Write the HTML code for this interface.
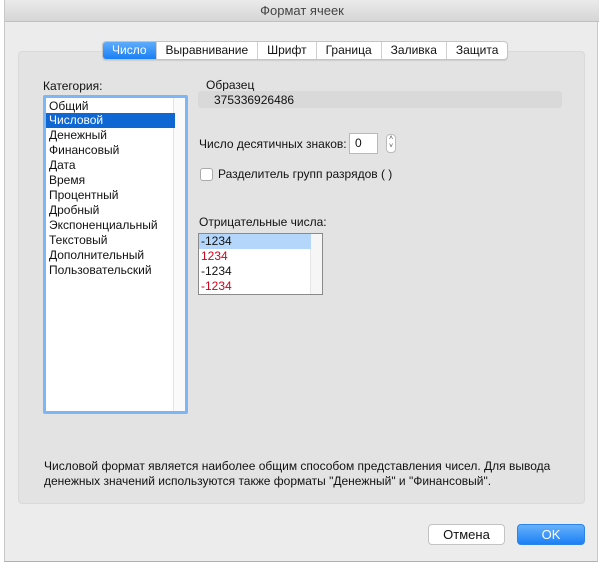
<!DOCTYPE html>
<html><head><meta charset="utf-8"><style>
*{margin:0;padding:0;box-sizing:border-box}
body{width:603px;height:564px;background:#fff;font-family:"Liberation Sans","DejaVu Sans",sans-serif;font-size:12px;color:#111;position:relative;overflow:hidden}
.a{position:absolute}
#win{left:4px;top:0;width:594px;height:562px;background:#ececec;border-left:1px solid #c8c8c8;border-right:1px solid #c8c8c8;border-bottom:1px solid #b0b0b0}
#title{left:0;top:0;width:594px;height:22px;background:linear-gradient(#ebebeb,#d6d6d6);border-bottom:1px solid #c0c0c0;text-align:center;line-height:22px;font-size:13px;color:#444}
#panel{left:18px;top:51px;width:567px;height:453px;background:#e3e3e3;border:1px solid #dadada;border-radius:4px}
#tabs{top:41px;height:19px;display:flex;border:1px solid #c4c4c4;border-radius:4px;background:#fff;overflow:hidden;box-shadow:0 1px 1px rgba(0,0,0,.1)}
#tabs div{padding:0 9px;line-height:17px;font-size:12px;border-left:1px solid #d0d0d0}
#tabs div:first-child{border-left:none;background:linear-gradient(#5fadfc,#1a7ff5);color:#fff;padding:0 9px}
#list{left:43px;top:95px;width:145px;height:319px;background:#fff;border:3px solid #7cb6f5;border-radius:2px}
#list .sc{position:absolute;right:0;top:0;width:12px;height:100%;border-left:1px solid #e4e4e4;background:#fafafa}
.it{position:absolute;left:0;height:15px;line-height:15px;font-size:12px;width:129px;padding-left:3px}
.sel{background:#0e67d2;color:#fff}
#sample{left:198px;top:91px;width:364px;height:17px;background:#d9d9d9;border-radius:3px;padding-left:16px;line-height:18px;font-size:12px}
#num{left:349px;top:133px;width:29px;height:21px;background:#fff;border:1px solid #b9b9b9;padding-left:5px;line-height:19px;font-size:12px}
#step{left:386px;top:134px;width:10px;height:19px;background:#fff;border:1px solid #bcbcbc;border-radius:4px;font-size:7px;line-height:8px;text-align:center;color:#444}
#chk{left:200px;top:168px;width:13px;height:13px;background:#fff;border:1px solid #aaa;border-radius:3px}
#neg{left:198px;top:233px;width:125px;height:62px;background:#fff;border:1px solid #8a8a8a}
#neg .sc{position:absolute;right:0;top:0;width:12px;height:100%;background:#f6f6f6;border-left:1px solid #e6e6e6}
.n{position:absolute;left:0;width:112px;height:15px;line-height:15px;padding-left:2px;font-size:12px}
.btn{height:21px;line-height:19px;text-align:center;font-size:13px;border-radius:4px}
</style></head><body>
<div class="a" id="win">
<div class="a" id="title">Формат ячеек</div>
</div>
<div class="a" id="panel"></div>
<div class="a" id="tabs" style="left:102px"><div>Число</div><div>Выравнивание</div><div>Шрифт</div><div>Граница</div><div>Заливка</div><div>Защита</div></div>
<div class="a" style="left:43px;top:79px">Категория:</div>
<div class="a" id="list"><div class="sc"></div>
<div class="it" style="top:1px">Общий</div>
<div class="it sel" style="top:15px">Числовой</div>
<div class="it" style="top:30px">Денежный</div>
<div class="it" style="top:45px">Финансовый</div>
<div class="it" style="top:60px">Дата</div>
<div class="it" style="top:75px">Время</div>
<div class="it" style="top:90px">Процентный</div>
<div class="it" style="top:105px">Дробный</div>
<div class="it" style="top:120px">Экспоненциальный</div>
<div class="it" style="top:135px">Текстовый</div>
<div class="it" style="top:150px">Дополнительный</div>
<div class="it" style="top:165px">Пользовательский</div>
</div>
<div class="a" style="left:206px;top:78px">Образец</div>
<div class="a" id="sample">375336926486</div>
<div class="a" style="left:199px;top:137px">Число десятичных знаков:</div>
<div class="a" id="num">0</div>
<div class="a" id="step">˄<br>˅</div>
<div class="a" id="chk"></div>
<div class="a" style="left:218px;top:167px">Разделитель групп разрядов ( )</div>
<div class="a" style="left:199px;top:215px">Отрицательные числа:</div>
<div class="a" id="neg"><div class="sc"></div>
<div class="n" style="top:0;background:#b4d6fb">-1234</div>
<div class="n" style="top:15px;color:#d0021b">1234</div>
<div class="n" style="top:30px">-1234</div>
<div class="n" style="top:45px;color:#d0021b">-1234</div>
</div>
<div class="a" style="left:44px;top:459px;line-height:15px;width:540px">Числовой формат является наиболее общим способом представления чисел. Для вывода<br>денежных значений используются также форматы "Денежный" и "Финансовый".</div>
<div class="a btn" style="left:428px;top:524px;width:77px;background:#fff;border:1px solid #c3c3c3">Отмена</div>
<div class="a btn" style="left:517px;top:524px;width:68px;background:linear-gradient(#67b1fb,#1b80f5);color:#fff;border:1px solid #2d84ea">OK</div>
</body></html>
